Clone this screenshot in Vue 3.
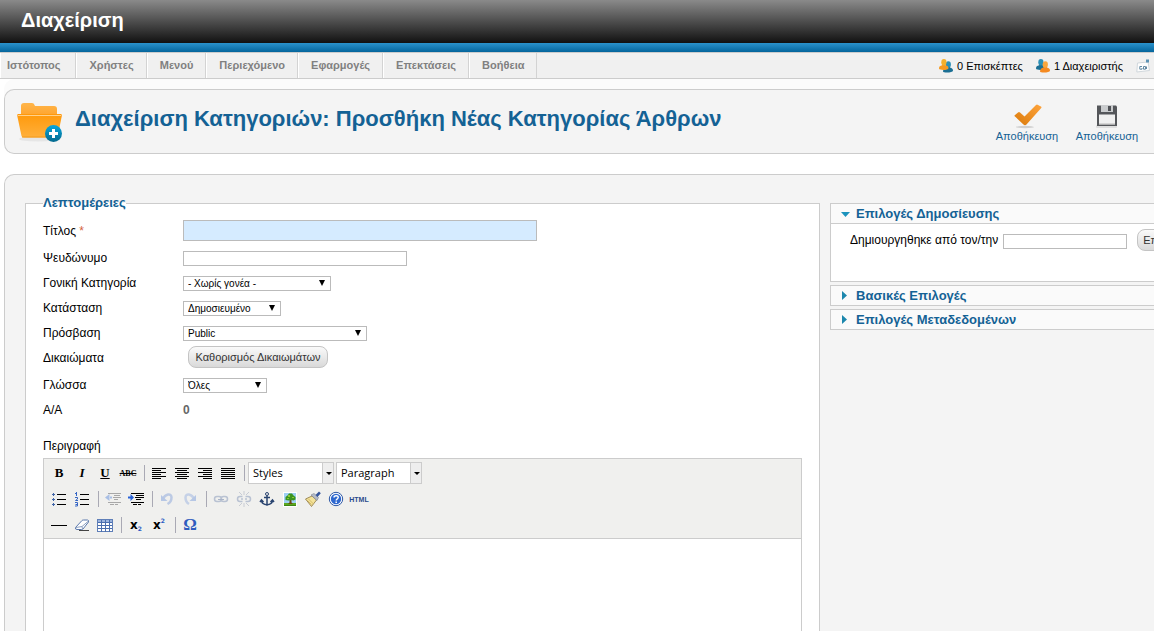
<script setup>
import { ref } from 'vue'

const menu = ['Ιστότοπος', 'Χρήστες', 'Μενού', 'Περιεχόμενο', 'Εφαρμογές', 'Επεκτάσεις', 'Βοήθεια']
const title = ref('')
const alias = ref('')
const author = ref('')
const body = ref('')
</script>

<template>
  <div class="page">
    <header class="brand"><span class="brand-name">Διαχείριση</span></header>
    <div class="stripe"></div>

    <div class="menubar">
      <nav class="menu">
        <a v-for="m in menu" :key="m" href="#">{{ m }}</a>
      </nav>
      <div class="status">
        <span class="stat">
          <svg width="14" height="14" viewBox="0 0 14 14">
            <path d="M4 12.500C4 10 5.500 9 7.500 8.500V7h3.500v1.500c2 .5 3 1.500 3 3 0 2.500-10 2.500-10 1z" fill="#1b6f94" />
            <ellipse cx="9.300" cy="5.500" rx="2.600" ry="3.200" fill="#2c8fb6" />
            <path d="M0 9.500C0 7.500 1 6.700 3.200 6.200V4.500h3.300v1.700c2 .5 3 1.300 3 3C9.500 11.500 0 11.500 0 9.500z" fill="#f59a20" />
            <ellipse cx="4.900" cy="3.200" rx="2.600" ry="3.200" fill="#f3b02c" />
          </svg>
          0 Επισκέπτες
        </span>
        <span class="stat">
          <svg width="14" height="14" viewBox="0 0 14 14">
            <path d="M0 9.500C0 7.500 1 6.700 3.200 6.200V4.500h3.300v1.700c2 .5 3 1.300 3 3C9.500 11.500 0 11.500 0 9.500z" fill="#1b6f94" />
            <ellipse cx="4.900" cy="3.200" rx="2.600" ry="3.200" fill="#2c8fb6" />
            <path d="M4 12.500C4 10 5.500 9 7.500 8.500V7h3.500v1.500c2 .5 3 1.500 3 3 0 2.500-10 2.500-10 1z" fill="#f58a20" />
            <ellipse cx="9.300" cy="5.500" rx="2.600" ry="3.200" fill="#f9a63c" />
          </svg>
          1 Διαχειριστής
        </span>
        <svg class="mail" width="14" height="14" viewBox="0 0 14 14">
          <path d="M1.500 4L12 3l1.500 8.500L.8 13z" fill="#fdfdfd" stroke="#d0d7dc" />
          <path d="M6 7.500H3.800v2.700H6V9M7.500 10.200V7.500h2v2.700zM10.500 7.500v2.500" fill="none" stroke="#6289a3" />
          <rect x="10.500" y="1" width="2" height="2" fill="#dff0fa" stroke="#5b92b4" />
        </svg>
      </div>
    </div>

    <section class="titlebar">
      <svg class="folder" width="48" height="42" viewBox="0 0 48 42">
        <defs>
          <linearGradient id="fb" x1="0" y1="0" x2="0" y2="1"><stop offset="0" stop-color="#ffb54a" /><stop offset="1" stop-color="#ffa42d" /></linearGradient>
          <linearGradient id="ff" x1="0" y1="0" x2="0" y2="1"><stop offset="0" stop-color="#ff990b" /><stop offset="1" stop-color="#ffb03c" /></linearGradient>
          <linearGradient id="fp" x1="0" y1="0" x2="0" y2="1"><stop offset="0" stop-color="#08a6dc" /><stop offset="1" stop-color="#04698e" /></linearGradient>
        </defs>
        <ellipse cx="21" cy="38" rx="19" ry="2.500" fill="#e6e6e6" />
        <path d="M4 15V5q0-3 3-3h8q2 0 2.500 2l.5 1h19q3 0 3 3v7z" fill="url(#fb)" />
        <path d="M1 13h43q1 0 .8 2l-4 20q-.5 1.500-2.500 1.500H7q-2 0-2.500-1.500L.3 15Q0 13 1 13z" fill="url(#ff)" />
        <path d="M1 14.500h43" stroke="#ffd18c" />
        <path d="M5 36h30" stroke="#f39a1d" />
        <circle cx="36.500" cy="32.500" r="8.500" fill="url(#fp)" />
        <path d="M36.500 28v9M32 32.500h9" stroke="#fff" stroke-width="3" />
      </svg>
      <h1>Διαχείριση Κατηγοριών: Προσθήκη Νέας Κατηγορίας Άρθρων</h1>
      <div class="tools">
        <button type="button" class="tool">
          <svg width="32" height="28" viewBox="0 0 32 28">
            <defs><linearGradient id="ck" x1="0" y1="1" x2="1" y2="0"><stop offset="0" stop-color="#d97909" /><stop offset="1" stop-color="#ffa43c" /></linearGradient></defs>
            <ellipse cx="14" cy="26" rx="9" ry="1.200" fill="#cfcfcf" />
            <path d="M4 14l3-2.500q1-1 2 0l4.500 4L25 4q1-1 2 0l3 1.500q1 .8 0 1.800L15.500 23.500q-1.500 1.500-3 0L4 15.500q-1-.8 0-1.500z" fill="url(#ck)" />
          </svg>
          <span>Αποθήκευση</span>
        </button>
        <button type="button" class="tool">
          <svg width="32" height="28" viewBox="0 0 32 28">
            <rect x="5" y="24" width="21" height="3" rx="1" fill="#dedede" />
            <path d="M6 4.500h19l1 1V25H6z" fill="#54565a" />
            <rect x="10" y="4" width="12" height="7" fill="#c9cbcd" />
            <rect x="17" y="5" width="3" height="5" fill="#505256" />
            <rect x="8" y="13.500" width="16" height="10" fill="#f0f0f0" />
            <path d="M8 23h16" stroke="#bbb" />
          </svg>
          <span>Αποθήκευση</span>
        </button>
      </div>
    </section>

    <main class="content">
      <fieldset class="details">
        <legend>Λεπτομέρειες</legend>
        <div class="row first">
          <label for="f-title">Τίτλος <span class="req">*</span></label>
          <input id="f-title" v-model="title" class="wide" type="text" required />
        </div>
        <div class="row">
          <label for="f-alias">Ψευδώνυμο</label>
          <input id="f-alias" v-model="alias" class="alias" type="text" />
        </div>
        <div class="row">
          <label for="f-parent">Γονική Κατηγορία</label>
          <span class="pick parent"><select id="f-parent"><option>- Χωρίς γονέα -</option></select></span>
        </div>
        <div class="row">
          <label for="f-state">Κατάσταση</label>
          <span class="pick state"><select id="f-state"><option>Δημοσιευμένο</option></select></span>
        </div>
        <div class="row">
          <label for="f-access">Πρόσβαση</label>
          <span class="pick access"><select id="f-access"><option>Public</option></select></span>
        </div>
        <div class="row">
          <label for="f-rules">Δικαιώματα</label>
          <button id="f-rules" type="button" class="pill">Καθορισμός Δικαιωμάτων</button>
        </div>
        <div class="row lang">
          <label for="f-lang">Γλώσσα</label>
          <span class="pick language"><select id="f-lang"><option>Όλες</option></select></span>
        </div>
        <div class="row">
          <label for="f-id">Α/Α</label>
          <output id="f-id">0</output>
        </div>
        <label class="desc" for="f-body">Περιγραφή</label>

        <div class="editor">
          <div class="bars">
            <div class="bar">
              <button type="button" class="b serif" aria-label="Bold"><b>B</b></button>
              <button type="button" class="b serif" aria-label="Italic"><i>I</i></button>
              <button type="button" class="b serif" aria-label="Underline"><u>U</u></button>
              <button type="button" class="b serif abc" aria-label="Strikethrough"><s>ABC</s></button>
              <span class="sep"></span>
              <button type="button" class="b" aria-label="Align left"><svg width="16" height="16"><path d="M1 3.500h14M1 5.500h9M1 7.500h14M1 9.500h9M1 11.500h14M1 13.500h9" stroke="#000" /></svg></button>
              <button type="button" class="b" aria-label="Align center"><svg width="16" height="16"><path d="M1 3.500h14M3 5.500h10M1 7.500h14M3 9.500h10M1 11.500h14M3 13.500h10" stroke="#000" /></svg></button>
              <button type="button" class="b" aria-label="Align right"><svg width="16" height="16"><path d="M1 3.500h14M6 5.500h9M1 7.500h14M6 9.500h9M1 11.500h14M6 13.500h9" stroke="#000" /></svg></button>
              <button type="button" class="b" aria-label="Justify"><svg width="16" height="16"><path d="M1 3.500h14M1 5.500h14M1 7.500h14M1 9.500h14M1 11.500h14M1 13.500h14" stroke="#000" /></svg></button>
              <span class="sep"></span>
              <span class="combo"><select aria-label="Styles"><option>Styles</option></select></span>
              <span class="combo"><select aria-label="Format"><option>Paragraph</option></select></span>
            </div>
            <div class="bar">
              <button type="button" class="b" aria-label="Bulleted list"><svg width="16" height="16"><path d="M6 3.500h9M6 8.500h9M6 13.500h9" stroke="#000" /><path d="M1 3.500h3M1 8.500h3M1 13.500h3M2.500 2v3M2.500 7v3M2.500 12v3" stroke="#3f64a8" /></svg></button>
              <button type="button" class="b" aria-label="Numbered list"><svg width="16" height="16"><path d="M6 3.500h9M6 8.500h9M6 13.500h9" stroke="#000" /><path d="M1 2.500h1.500M2.500 1v4M1 6.500h2.500v1.500l-2 1.500h2.500M1 11.500h2.500v3.500h-2.500M1.500 13.500h2" fill="none" stroke="#3465c5" /></svg></button>
              <span class="sep"></span>
              <button type="button" class="b" disabled aria-label="Outdent"><svg width="16" height="16"><path d="M3 2.500h13M9 4.500h6M8 6.500h8M9 8.500h4M3 11.500h13M5 13.500h4M10 13.500h3" stroke="#a8a8a8" /><path d="M4.500 3L0 6.500 4.500 10zM4 5.500h3v2H4z" fill="#a9bfe5" /></svg></button>
              <button type="button" class="b" aria-label="Indent"><svg width="16" height="16"><path d="M3 2.500h13M8 4.500h8M7 6.500h9M8 8.500h5M3 11.500h13M5 13.500h4M10 13.500h3" stroke="#000" /><path d="M2.500 3L6 6.500 2.500 10zM0 5.500h3v2H0z" fill="#2863d8" /></svg></button>
              <span class="sep"></span>
              <button type="button" class="b" disabled aria-label="Undo"><svg width="16" height="16"><path d="M4 8C6 3 12.500 1.500 12.500 6.500c0 3-1 5-4 6.500" fill="none" stroke="#bccae4" stroke-width="2.500" /><path d="M2 4v6h6.500z" fill="#b6c7e5" /></svg></button>
              <button type="button" class="b" disabled aria-label="Redo"><svg width="16" height="16"><path d="M12 8C10 3 3.500 1.500 3.500 6.500c0 3 1 5 3.500 6.500" fill="none" stroke="#c5d1e7" stroke-width="2.500" /><path d="M14 4v6H7.500z" fill="#b6c7e5" /></svg></button>
              <span class="sep"></span>
              <button type="button" class="b" disabled aria-label="Link"><svg width="16" height="16"><rect x="1.500" y="5.500" width="7" height="5" rx="2.500" fill="none" stroke="#b9c2d2" stroke-width="1.500" /><rect x="8" y="5.500" width="6.500" height="5" rx="2.500" fill="none" stroke="#b9c2d2" stroke-width="1.500" /><path d="M5 8.500h6" stroke="#a9b4c8" /></svg></button>
              <button type="button" class="b" disabled aria-label="Unlink"><svg width="16" height="16"><path d="M6.500 5.500H4Q1.500 5.500 1.500 8T4 10.500h2.500M9.500 5.500H12Q14.500 5.500 14.500 8T12 10.500H9.500M5 8h2M9 8h2" fill="none" stroke="#b9c2d2" stroke-width="1.500" /><path d="M8 0v4M8 12v4M3 1l3 3M13 1l-3 3M3 15l3-3M13 15l-3-3" stroke="#c8ccd4" /></svg></button>
              <button type="button" class="b" aria-label="Anchor"><svg width="16" height="16"><circle cx="8" cy="3" r="1.500" fill="none" stroke="#2a4470" /><path d="M8 4.500v10M5 6.500h6" stroke="#2a4470" stroke-width="1.500" /><path d="M2.500 9.500C3 15 13 15 13.500 9.500M1 11l1.500-2L4.500 11M11.500 11l2-2L15 11" fill="none" stroke="#2a4470" stroke-width="1.500" /></svg></button>
              <button type="button" class="b" aria-label="Image"><svg width="16" height="16"><rect x="1" y="1" width="14" height="15" fill="#fff" /><rect x="2" y="2" width="12" height="10" fill="#9fd0f5" /><rect x="2" y="12" width="12" height="3" fill="#5ba71e" /><path d="M7.500 8h2v3.500l1.500 1.500H6l1.500-1.500z" fill="#6a4a12" /><path d="M3.500 6l2-1.500L7 2.500h3L11.500 4.500l2 1.500v2.500l-2 1-2-.5-3 .5-3-.5z" fill="#3b9420" /><path d="M6 4h2v2H6zM10 6h2v1h-2zM5 7h2v1H5z" fill="#8ac832" /><path d="M2 14.500h12" stroke="#3d8413" /></svg></button>
              <button type="button" class="b" aria-label="Clean up"><svg width="16" height="16"><path d="M.5 8l6.500-3 4.500 4-5 6.500z" fill="#f4e39a" stroke="#8a7440" stroke-width=".8" /><path d="M3.500 8l5 5M2.500 9.500l4 4" stroke="#d5bc6a" /><path d="M6 4l3-1.500 4.500 4L12 9.500z" fill="#b6bcc8" stroke="#777f90" stroke-width=".6" /><path d="M10.500 4L14 .5l1.800 1.800L12.500 6z" fill="#34549b" /></svg></button>
              <button type="button" class="b" aria-label="Help"><svg width="16" height="16"><circle cx="8" cy="8" r="6.700" fill="#fff" stroke="#2d57a5" /><circle cx="8" cy="8" r="5.200" fill="#2e68cf" /><path d="M6 6.500C6 4 10.500 4 10.200 6.500 10 8 8.200 8 8.200 9.500M8.200 10.500v1.500" fill="none" stroke="#fff" stroke-width="1.500" /></svg></button>
              <button type="button" class="b html" aria-label="HTML source">HTML</button>
            </div>
            <div class="bar">
              <button type="button" class="b" aria-label="Horizontal rule"><svg width="16" height="16"><path d="M0 8.500h16" stroke="#000" /></svg></button>
              <button type="button" class="b" aria-label="Remove formatting"><svg width="16" height="16"><path d="M1.500 10.500L8 3.500q.5-.5 1.500-.5h4q1.500 0 1 2L9 12q-.5.500-1.500.5H3Q1 12.500 1.500 10.500z" fill="#fff" stroke="#5a78ac" /><path d="M2 10.500l6-1 6.500-5.500M8 9.500l.5 2.500" fill="none" stroke="#8da0c0" /><path d="M5 13.500h10" stroke="#444" /></svg></button>
              <button type="button" class="b" aria-label="Table"><svg width="16" height="16"><rect x=".5" y="2.500" width="15" height="12" fill="#fff" stroke="#5f7fb8" /><path d="M1 4h14" stroke="#9bb4de" stroke-width="2" /><path d="M1 5.500h14M1 8.500h14M1 11.500h14M4.500 3v12M8.500 3v12M12.500 3v12" stroke="#4b6fae" /></svg></button>
              <span class="sep"></span>
              <button type="button" class="b script" aria-label="Subscript">x<sub>2</sub></button>
              <button type="button" class="b script" aria-label="Superscript">x<sup>2</sup></button>
              <span class="sep"></span>
              <button type="button" class="b omega" aria-label="Special character">Ω</button>
            </div>
          </div>
          <textarea id="f-body" v-model="body"></textarea>
        </div>
      </fieldset>

      <aside class="side">
        <section class="panel">
          <h2><a href="#"><svg width="9" height="9"><path d="M0 3h9L4.500 8z" fill="#1c93bd" /></svg>Επιλογές Δημοσίευσης</a></h2>
          <div class="panel-body">
            <label for="f-author">Δημιουργηθηκε από τον/την</label>
            <input id="f-author" v-model="author" type="text" />
            <button type="button" class="pill">Επιλογή Χρήστη</button>
          </div>
        </section>
        <section class="panel">
          <h2><a href="#"><svg width="9" height="9"><path d="M1 0l5 4.500L1 9z" fill="#1c87ad" /></svg>Βασικές Επιλογές</a></h2>
        </section>
        <section class="panel">
          <h2><a href="#"><svg width="9" height="9"><path d="M1 0l5 4.500L1 9z" fill="#1c87ad" /></svg>Επιλογές Μεταδεδομένων</a></h2>
        </section>
      </aside>
    </main>
  </div>
</template>

<style>
body {
  margin: 0;
  background: #fff;
}
</style>

<style scoped>
.page {
  display: flex;
  flex-direction: column;
  min-height: 100vh;
  overflow: hidden;
  font: 12px/16px "Liberation Sans", Arial, sans-serif;
  color: #000;
}
.page *,
.page *::after {
  box-sizing: border-box;
}
button,
input,
select,
textarea {
  font-family: inherit;
  margin: 0;
  border-radius: 0;
}
a {
  text-decoration: none;
}
.brand {
  height: 43px;
  padding: 8px 21px;
  background: linear-gradient(#8a8a8a, #111);
}
.brand-name {
  font-size: 20px;
  line-height: 24px;
  font-weight: bold;
  color: #fff;
}
.stripe {
  height: 9px;
  background: linear-gradient(#2a92cc, #04659c);
}
.menubar {
  display: flex;
  justify-content: space-between;
  height: 27px;
  border-top: 1px solid #ccc;
  border-bottom: 1px solid #ccc;
  background: #f0f0f0;
}
.menu {
  display: flex;
}
.menu a {
  padding: 0 12px;
  border-left: 1px solid #fff;
  border-right: 1px solid #d3d3d3;
  font-size: 11px;
  line-height: 25px;
  font-weight: bold;
  color: #808080;
}
.menu a:first-child {
  padding: 0 15px 0 6px;
}
.status {
  display: flex;
  align-items: center;
  gap: 13px;
  padding-right: 4px;
  font-size: 11px;
}
.stat {
  display: flex;
  align-items: center;
  gap: 4px;
}
.titlebar {
  display: flex;
  align-items: center;
  height: 65px;
  margin: 10px 0 20px 4px;
  padding: 0 7px 0 12px;
  border: 1px solid #ccc;
  border-right: 0;
  border-radius: 10px 0 0 10px;
  background: #f4f4f4;
  box-shadow: 0 -10px 0 #fbfbfb;
}
h1 {
  flex: 1;
  margin: 0 0 6px 10px;
  font-size: 22px;
  line-height: 28px;
  color: #146295;
  white-space: nowrap;
}
.tools {
  display: flex;
}
.tool {
  display: flex;
  flex-direction: column;
  align-items: center;
  width: 80px;
  padding: 0;
  border: 0;
  background: none;
  font-size: 11px;
  line-height: 14px;
  color: #146295;
}
.content {
  flex: 1;
  display: flex;
  gap: 10px;
  margin-left: 4px;
  padding: 20px 0 0 20px;
  border: 1px solid #ccc;
  border-right: 0;
  border-bottom: 0;
  border-radius: 10px 0 0 0;
  background: #f4f4f4;
}
.details {
  flex: 1;
  display: flex;
  flex-direction: column;
  min-width: 0;
  margin: 0;
  padding: 6px 17px 0;
  border: 1px solid #ccc;
  border-bottom: 0;
  background: #fff;
}
legend {
  padding: 0;
  font-size: 13px;
  line-height: 16px;
  font-weight: bold;
  color: #146295;
}
.row {
  display: flex;
  align-items: center;
  height: 25px;
}
.row.first {
  height: 28px;
}
.row label {
  width: 140px;
}
.row.lang {
  margin-top: 2px;
}
.req {
  color: #d5633c;
}
input {
  height: 15px;
  padding: 0 4px;
  border: 1px solid #bbb;
  background: #fff;
  font-size: 10px;
}
.wide {
  width: 354px;
  height: 21px;
  margin-bottom: 2px;
  background: #d5ebff;
}
.alias {
  width: 224px;
  margin-top: 2px;
}
.pick {
  position: relative;
  height: 15px;
  margin-top: 2px;
}
.pick select {
  display: block;
  width: 100%;
  height: 15px;
  padding: 0 4px;
  border: 1px solid #bbb;
  appearance: none;
  background: #fff;
  color: #000;
  font-size: 10px;
  line-height: 13px;
}
.pick::after {
  content: "";
  position: absolute;
  right: 6px;
  top: 4px;
  border: 3px solid transparent;
  border-top: 6px solid #000;
  border-bottom: 0;
  pointer-events: none;
}
.parent {
  width: 148px;
}
.state {
  width: 98px;
}
.access {
  width: 184px;
}
.language {
  width: 84px;
}
.pill {
  flex: none;
  height: 22px;
  margin-left: 5px;
  padding: 0 5px;
  border: 1px solid #c4c4c4;
  border-radius: 8px;
  background: linear-gradient(#fafafa, #d9d9d9);
  font-size: 11px;
  line-height: 20px;
  color: #333;
}
.row .pill {
  width: 140px;
  margin-bottom: 2px;
}
output {
  font-size: 12px;
  font-weight: bold;
  color: #666;
}
.desc {
  margin-top: 12px;
  line-height: 24px;
}
.editor {
  flex: 1;
  display: flex;
  flex-direction: column;
  border: 1px solid #ccc;
  border-bottom: 0;
}
.bars {
  padding: 1px 4px 0;
  border-bottom: 1px solid #ccc;
  background: #f0f0ee;
}
.bar {
  display: flex;
  align-items: center;
  height: 26px;
}
.b {
  display: flex;
  flex: none;
  align-items: center;
  justify-content: center;
  width: 23px;
  height: 22px;
  padding: 0 1px 0 0;
  border: 0;
  background: none;
  color: #000;
}
.serif {
  font-family: "Liberation Serif", "Times New Roman", serif;
  font-size: 13px;
  font-weight: bold;
}
.abc {
  font-size: 8px;
}
.html {
  font-size: 7px;
  font-weight: bold;
  color: #2a4a8c;
}
.script {
  font-family: "DejaVu Sans", Verdana, sans-serif;
  font-size: 12px;
  font-weight: bold;
}
.script sub,
.script sup {
  font-size: 6px;
  line-height: 6px;
  color: #2a5bc4;
}
.script sub {
  align-self: flex-end;
  margin-bottom: 4px;
}
.script sup {
  align-self: flex-start;
  margin-top: 4px;
}
.omega {
  font-family: "Liberation Serif", "Times New Roman", serif;
  font-size: 17px;
  font-weight: bold;
  color: #2f5cbe;
}
.sep {
  width: 8px;
  height: 16px;
  background: linear-gradient(#a9a9b4, #a9a9b4) center / 1px 100% no-repeat;
}
.combo {
  position: relative;
  width: 86px;
  height: 22px;
  margin: 0 2px 1px 0;
}
.combo select {
  width: 100%;
  height: 22px;
  padding: 0 4px;
  border: 1px solid #ccc;
  appearance: none;
  background: linear-gradient(90deg, #ccc 1px, #eee 1px) right / 11px 100% no-repeat #fff;
  font-family: "Open Sans", "Noto Sans", sans-serif;
  font-size: 11px;
  color: #000;
}
.combo::after {
  content: "";
  position: absolute;
  right: 2px;
  top: 10px;
  border: 3px solid transparent;
  border-top-color: #000;
  border-bottom: 0;
  pointer-events: none;
}
textarea {
  flex: 1;
  width: 100%;
  min-height: 90px;
  padding: 8px;
  border: 0;
  resize: none;
  background: #fff;
}
.side {
  flex: none;
  display: flex;
  flex-direction: column;
  gap: 3px;
  width: 324px;
  padding-top: 8px;
}
.panel {
  border: 1px solid #ccc;
  border-right: 0;
  background: #fff;
}
h2 {
  margin: 0;
  background: #fafafa;
  font-size: 13px;
  line-height: 19px;
}
h2 a {
  display: flex;
  align-items: center;
  gap: 6px;
  padding-left: 10px;
  color: #146295;
}
.panel-body {
  display: flex;
  align-items: flex-start;
  gap: 5px;
  height: 58px;
  padding: 5px 0 0 19px;
  border-top: 1px solid #ccc;
  line-height: 22px;
  white-space: nowrap;
  overflow: hidden;
}
.panel-body input {
  flex: none;
  width: 124px;
  margin-top: 5px;
}
</style>
